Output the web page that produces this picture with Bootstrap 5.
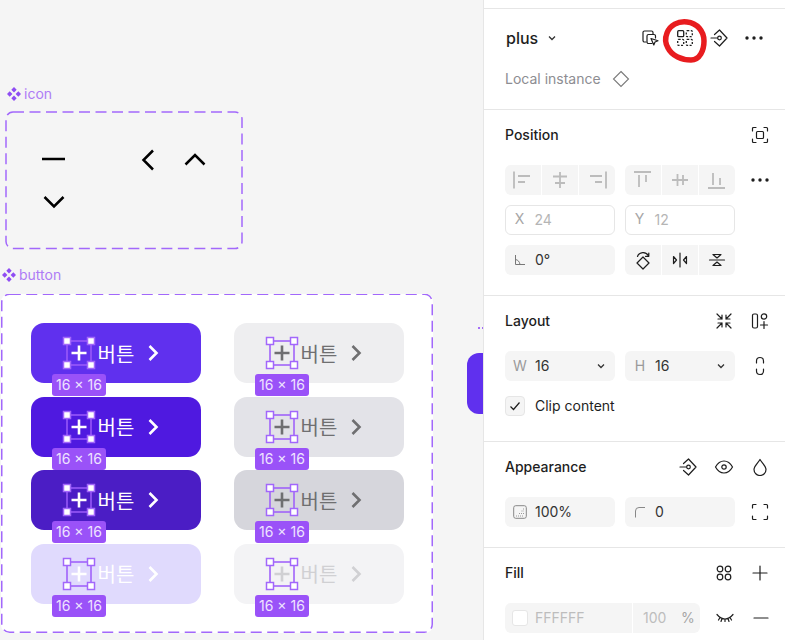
<!DOCTYPE html>
<html lang="ko">
<head>
<meta charset="utf-8">
<title>plus</title>
<link href="https://cdn.jsdelivr.net/npm/bootstrap@5.3.0/dist/css/bootstrap.min.css" rel="stylesheet">
<style>
html,body{margin:0;height:640px;overflow:hidden;background:#f5f5f5}
body{font-family:Inter,"Noto Sans CJK KR",sans-serif;font-size:14px;color:#1e1e1e}
.stage{width:785px;height:640px;position:relative}
.board{width:483px;height:640px;position:relative;overflow:hidden;background:#f5f5f5}
.fr-label{position:absolute;display:flex;align-items:center;gap:3px;color:#ae7cf6;font-size:14px;line-height:16px;white-space:nowrap}
.fr-icon{position:absolute;left:5px;top:111px;width:238px;height:139px}
.fr-btn{position:absolute;left:1px;top:294px;width:432px;height:339px;background:#fff;border-radius:8px;display:grid;grid-template-columns:170px 170px;grid-auto-rows:60px;column-gap:33px;row-gap:13.67px;padding:29px 0 0 30px}
.fr-line{position:absolute;inset:0;pointer-events:none}
.kbtn{position:relative;border-radius:13px;display:flex;align-items:center;justify-content:center;gap:6.5px;font-size:20px;line-height:24px;color:#fff}
.kb-1{background:#6030ee}.kb-2{background:#4f19e0}.kb-3{background:#4b1dc5}.kb-4{background:#e0dafd}
.kg-1{background:#eeeef0}.kg-2{background:#e3e3e8}.kg-3{background:#d6d6dc}.kg-4{background:#f3f3f5}
.kg-1,.kg-2,.kg-3{color:#6f6f71}.kg-4{color:#d0d0d3}
.word{padding-top:3px}
.sel{width:24px;height:24px;position:relative;flex:none}
.sel>svg{display:block}
.sel-over{position:absolute;left:-5px;top:-5px;width:34px;height:34px}
.dim{width:54px;height:22px;position:absolute;left:21px;top:51px;z-index:2;background:#9a52f8;border-radius:3px;color:#eee3ff;font-size:14px;line-height:22px;text-align:center;white-space:nowrap}
.stub{position:absolute;left:467px;top:353px;width:30px;height:61px;border-radius:12px;background:#6030ee}
.stub-dots{position:absolute;left:478px;top:327px;width:6px;height:2px;border-top:2px dotted #a56ef8}
.panel{position:absolute;left:483px;top:0;width:302px;height:640px;background:#fff;border-left:1px solid #e6e6e6;padding-top:8px;overflow:hidden}
.sect{border-top:1.5px solid #e6e6e6;padding-left:21px}
.s-top{height:101px;padding-top:17px}
.s-pos{height:186px;padding-top:14.5px}
.s-lay{height:146px;padding-top:14.5px}
.s-app{height:106px;padding-top:14.5px}
.s-fill{height:100px;padding-top:14.5px}
.phead{height:20px;line-height:20px;font-weight:500;font-size:14px;color:#1e1e1e;padding-right:7px;margin-bottom:20px}
.cell{width:36px;height:20px;display:flex;align-items:center;justify-content:center;flex:none}
.rowg{display:grid;grid-template-columns:110px 110px 30px;column-gap:10px;align-items:center;margin-bottom:10px}
.seg{height:30px;border-radius:6px;background:#f5f5f5;display:flex;overflow:hidden}
.seg>span{flex:1;display:flex;align-items:center;justify-content:center;border-left:1px solid #fff}
.seg>span:first-child{border-left:0}
.fld{height:30px;border-radius:6px;background:#f5f5f5;display:flex;align-items:center;position:relative;padding-left:30px;line-height:30px;color:#333}
.fld.out{background:#fff;border:1.5px solid #e6e6e6;padding-left:28.5px;color:#b5b5b5}
.fld-k{position:absolute;left:0;top:0;width:30px;height:100%;display:flex;align-items:center;justify-content:center;color:#9a9a9a;font-size:14px}
.fld.out .fld-k{left:-1.5px;top:-1.5px;height:30px;color:#a6a6a6}
.fld-c{position:absolute;right:9px;top:0;height:100%;display:flex;align-items:center}
.mid{display:flex;justify-content:center;align-items:center}
.plusname{font-size:16px;font-weight:500;line-height:20px;margin-left:1px}
.chev-top{margin-left:9px}
.local{color:#8d8d92;font-size:14px;line-height:20px}
.diam{margin-left:11px}
.tcell{width:34.5px;height:24px;display:flex;align-items:center;justify-content:center;flex:none}
.chk{width:20px;height:20px;border-radius:4px;background:#f5f5f5;border:1px solid #e6e6e6;display:flex;align-items:center;justify-content:center}
.fillrow{width:195px;height:30px;border-radius:6px;background:#f5f5f5;display:flex;align-items:center;position:relative;color:#bdbdbd}
.swatch{width:16px;height:16px;background:#fff;border:1px solid #e6e6e6;border-radius:3px;margin-left:7px;margin-right:7px}
.fsep{position:absolute;left:127px;top:0;bottom:0;width:1px;background:#fff}
.f-num{position:absolute;left:138px}
.f-pct{position:absolute;left:176px;color:#a5a5a5}
.scribble{position:absolute;left:0;top:0;width:785px;height:640px;pointer-events:none}
svg{flex:none}
.ink{fill:none;stroke:#1e1e1e;stroke-width:1.2;stroke-linecap:round;stroke-linejoin:round}
.mut{fill:none;stroke:#bcbcbc;stroke-width:1.8}
</style>
</head>
<body>
<svg width="0" height="0" class="position-absolute">
<symbol id="m" viewBox="0 0 14 14"><g fill="#8f4df3"><path d="M7 0l2.7 2.7L7 5.4 4.3 2.7z"/><path d="M7 8.6l2.7 2.7L7 14l-2.7-2.7z"/><path d="M2.7 4.3l2.7 2.7-2.7 2.7L0 7z"/><path d="M11.3 4.3L14 7l-2.7 2.7L8.600 7z"/></g></symbol>
<symbol id="box" viewBox="0 0 34 34"><rect x="5" y="5" width="24" height="24" fill="none" stroke="#9c5bfa" stroke-width="1.5"/><g fill="#fff" stroke="#a267fb" stroke-width="1.5"><rect x="1.500" y="1.500" width="7" height="7"/><rect x="25.500" y="1.500" width="7" height="7"/><rect x="1.500" y="25.500" width="7" height="7"/><rect x="25.500" y="25.500" width="7" height="7"/></g></symbol>
<symbol id="pl" viewBox="0 0 24 24"><path d="M12 4.500v15M4.500 12h15" fill="none" stroke="currentColor" stroke-width="2.6"/></symbol>
<symbol id="ch" viewBox="0 0 24 24"><path d="M8.500 5l7 7-7 7" fill="none" stroke="currentColor" stroke-width="2.6"/></symbol>
<symbol id="dn" viewBox="0 0 10 10"><path d="M2 3.500L5 6.500l3-3" fill="none" stroke="#333" stroke-width="1.300"/></symbol>
<symbol id="dots" viewBox="0 0 20 6"><circle cx="3" cy="3" r="1.700" fill="#1e1e1e"/><circle cx="10" cy="3" r="1.700" fill="#1e1e1e"/><circle cx="17" cy="3" r="1.700" fill="#1e1e1e"/></symbol>
<symbol id="comp" viewBox="0 0 20 20"><path class="ink" d="M5.500 6.500L10.500 2 18 10 10.500 18 5.500 13.500M2 10H8.500"/><circle class="ink" cx="10.500" cy="10" r="1.800"/></symbol>
</svg>

<div class="stage">
  <div class="board">
    <div class="fr-label" style="left:7px;top:86px"><svg width="14" height="14"><use href="#m"/></svg><span>icon</span></div>
    <div class="fr-icon">
      <svg class="fr-line" width="238" height="139" viewBox="0 0 238 139">
        <rect x="1" y="1" width="236" height="136.500" rx="7" fill="none" stroke="#a268fb" stroke-width="1.500" stroke-dasharray="11 5.500"/>
        <g fill="none" stroke="#000" stroke-width="2.500">
          <path d="M37 48h23"/>
          <path d="M148 39.500l-9.500 9.500 9.500 9.500"/>
          <path d="M180.500 53.500l9.500-9.500 9.500 9.500"/>
          <path d="M39.500 86l9.500 9.500 9.500-9.500"/>
        </g>
      </svg>
    </div>
    <div class="fr-label" style="left:2px;top:267px"><svg width="14" height="14"><use href="#m"/></svg><span>button</span></div>

    <div class="fr-btn">
      <svg class="fr-line" width="432" height="339" viewBox="0 0 432 339">
        <rect x="0.750" y="0.250" width="430.500" height="338" rx="8" fill="none" stroke="#a268fb" stroke-width="1.500" stroke-dasharray="11 5.500"/>
      </svg>
      <div class="kbtn kb-1"><span class="sel"><svg width="24" height="24"><use href="#pl"/></svg><svg class="sel-over"><use href="#box"/></svg></span><span class="word">버튼</span><svg width="24" height="24"><use href="#ch"/></svg><span class="dim">16 × 16</span></div>
      <div class="kbtn kg-1"><span class="sel"><svg width="24" height="24"><use href="#pl"/></svg><svg class="sel-over"><use href="#box"/></svg></span><span class="word">버튼</span><svg width="24" height="24"><use href="#ch"/></svg><span class="dim">16 × 16</span></div>
      <div class="kbtn kb-2"><span class="sel"><svg width="24" height="24"><use href="#pl"/></svg><svg class="sel-over"><use href="#box"/></svg></span><span class="word">버튼</span><svg width="24" height="24"><use href="#ch"/></svg><span class="dim">16 × 16</span></div>
      <div class="kbtn kg-2"><span class="sel"><svg width="24" height="24"><use href="#pl"/></svg><svg class="sel-over"><use href="#box"/></svg></span><span class="word">버튼</span><svg width="24" height="24"><use href="#ch"/></svg><span class="dim">16 × 16</span></div>
      <div class="kbtn kb-3"><span class="sel"><svg width="24" height="24"><use href="#pl"/></svg><svg class="sel-over"><use href="#box"/></svg></span><span class="word">버튼</span><svg width="24" height="24"><use href="#ch"/></svg><span class="dim">16 × 16</span></div>
      <div class="kbtn kg-3"><span class="sel"><svg width="24" height="24"><use href="#pl"/></svg><svg class="sel-over"><use href="#box"/></svg></span><span class="word">버튼</span><svg width="24" height="24"><use href="#ch"/></svg><span class="dim">16 × 16</span></div>
      <div class="kbtn kb-4"><span class="sel"><svg width="24" height="24"><use href="#pl"/></svg><svg class="sel-over"><use href="#box"/></svg></span><span class="word">버튼</span><svg width="24" height="24"><use href="#ch"/></svg><span class="dim">16 × 16</span></div>
      <div class="kbtn kg-4"><span class="sel"><svg width="24" height="24"><use href="#pl"/></svg><svg class="sel-over"><use href="#box"/></svg></span><span class="word">버튼</span><svg width="24" height="24"><use href="#ch"/></svg><span class="dim">16 × 16</span></div>
    </div>
    <div class="stub-dots"></div>
    <div class="stub"></div>
  </div>

  <aside class="panel">
    <section class="sect s-top">
      <div class="d-flex align-items-center" style="height:24px">
        <span class="plusname">plus</span>
        <svg class="chev-top" width="10" height="10"><use href="#dn"/></svg>
        <div class="d-flex ms-auto" style="padding-right:14px">
          <span class="tcell"><svg width="20" height="20" viewBox="0 0 20 20"><path class="ink" d="M6 14H4.500A1.500 1.500 0 0 1 3 12.500v-8A1.500 1.500 0 0 1 4.500 3h7A1.500 1.500 0 0 1 13 4.500V6"/><path class="ink" d="M12 15.500H8.500A1.500 1.500 0 0 1 7 14V8A1.500 1.500 0 0 1 8.500 6.500H14A1.500 1.500 0 0 1 15.500 8v2"/><path class="ink" d="M11 10.500l7 2.300-3 1.200-1.200 3z" fill="#fff"/></svg></span>
          <span class="tcell"><svg width="20" height="20" viewBox="0 0 20 20"><rect x="2.700" y="2.700" width="6" height="6" rx="1" fill="none" stroke="#1e1e1e" stroke-width="1.300"/><g fill="none" stroke="#1e1e1e" stroke-width="1.300" stroke-dasharray="2 1.500"><rect x="11.300" y="2.700" width="6" height="6" rx="1"/><rect x="2.700" y="11.300" width="6" height="6" rx="1"/><rect x="11.300" y="11.300" width="6" height="6" rx="1"/></g></svg></span>
          <span class="tcell"><svg width="20" height="20"><use href="#comp"/></svg></span>
          <span class="tcell"><svg width="20" height="6"><use href="#dots"/></svg></span>
        </div>
      </div>
      <div class="d-flex align-items-center" style="margin-top:19px;height:20px">
        <span class="local">Local instance</span>
        <svg class="diam" width="18" height="18" viewBox="0 0 18 18"><path d="M9 1.500L16.500 9 9 16.500 1.500 9z" fill="none" stroke="#7a7a7a" stroke-width="1.100"/></svg>
      </div>
    </section>

    <section class="sect s-pos">
      <div class="phead d-flex justify-content-between align-items-center"><span>Position</span>
        <span class="cell"><svg width="18" height="18" viewBox="0 0 18 18"><path class="ink" d="M1.500 5V2.500a1 1 0 0 1 1-1H5M13 1.500h2.500a1 1 0 0 1 1 1V5M16.500 13v2.500a1 1 0 0 1-1 1H13M5 16.500H2.500a1 1 0 0 1-1-1V13"/><rect class="ink" x="5.500" y="5.500" width="7" height="7" rx="1"/></svg></span></div>
      <div class="rowg">
        <div class="seg">
          <span><svg width="20" height="20" viewBox="0 0 20 20"><path class="mut" d="M1 1.500v17M5 6h12M5 12h7"/></svg></span>
          <span><svg width="20" height="20" viewBox="0 0 20 20"><path class="mut" d="M10 2v16M3 6.500h14M5 13h10"/></svg></span>
          <span><svg width="20" height="20" viewBox="0 0 20 20"><path class="mut" d="M19 1.500v17M3 6h12M8 12h7"/></svg></span>
        </div>
        <div class="seg">
          <span><svg width="20" height="20" viewBox="0 0 20 20"><path class="mut" d="M1 2h17M6 5v12M13 5v7"/></svg></span>
          <span><svg width="20" height="20" viewBox="0 0 20 20"><path class="mut" d="M2 10h16M7.500 4v12M13 5v10"/></svg></span>
          <span><svg width="20" height="20" viewBox="0 0 20 20"><path class="mut" d="M1 18h17M6 3v12M13 8v7"/></svg></span>
        </div>
        <div class="mid"><svg width="20" height="6"><use href="#dots"/></svg></div>
      </div>
      <div class="rowg">
        <div class="fld out"><span class="fld-k">X</span>24</div>
        <div class="fld out"><span class="fld-k">Y</span>12</div>
      </div>
      <div class="rowg">
        <div class="fld"><span class="fld-k"><svg width="14" height="14" viewBox="0 0 14 14"><path d="M2.500 2v9.500H12M2.500 6.500c2.500.5 4 2 4.500 5" fill="none" stroke="#777" stroke-width="1"/></svg></span>0°</div>
        <div class="seg">
          <span><svg width="20" height="20" viewBox="0 0 20 20"><path class="ink" d="M10 7L16 13 10 19 4 13zM4.500 6.500C6 2 13 1 15.500 6M15.800 3v3.300h-3.300"/></svg></span>
          <span><svg width="20" height="20" viewBox="0 0 20 20"><path class="ink" d="M10 3v14M3.500 6.500L6.500 10 3.500 13.500zM16.500 6.500L13.500 10 16.500 13.500z"/></svg></span>
          <span><svg width="20" height="20" viewBox="0 0 20 20"><path class="ink" d="M2.500 10h15M6 4.500h8L10 8zM6 15.500h8L10 12z"/></svg></span>
        </div>
      </div>
    </section>

    <section class="sect s-lay">
      <div class="phead d-flex align-items-center"><span class="me-auto">Layout</span>
        <span class="cell"><svg width="18" height="18" viewBox="0 0 18 18"><path class="ink" d="M2 2l5 5M3 7h4V3M16 2l-5 5M15 7h-4V3M2 16l5-5M3 11h4v4M16 16l-5-5M15 11h-4v4"/></svg></span>
        <span class="cell"><svg width="18" height="18" viewBox="0 0 18 18"><rect class="ink" x="1.500" y="2" width="5" height="14" rx="1.500"/><circle class="ink" cx="13" cy="4.500" r="2.700"/><path class="ink" d="M13 9.500v7M9.500 13h7"/></svg></span>
      </div>
      <div class="rowg" style="margin-bottom:15px">
        <div class="fld"><span class="fld-k">W</span>16<span class="fld-c"><svg width="10" height="10"><use href="#dn"/></svg></span></div>
        <div class="fld"><span class="fld-k">H</span>16<span class="fld-c"><svg width="10" height="10"><use href="#dn"/></svg></span></div>
        <div class="mid"><svg width="12" height="20" viewBox="0 0 12 20"><path class="ink" d="M2.500 7V5a3.500 3.500 0 0 1 7 0v2M2.500 13v2a3.500 3.500 0 0 0 7 0v-2"/></svg></div>
      </div>
      <div class="d-flex align-items-center" style="gap:10px;height:20px">
        <span class="chk"><svg width="12" height="12" viewBox="0 0 12 12"><path d="M1.500 6.500L4.500 9.500 10.500 2.500" fill="none" stroke="#1e1e1e" stroke-width="1.200"/></svg></span>
        <span>Clip content</span>
      </div>
    </section>

    <section class="sect s-app">
      <div class="phead d-flex align-items-center"><span class="me-auto">Appearance</span>
        <span class="cell"><svg width="20" height="20"><use href="#comp"/></svg></span>
        <span class="cell"><svg width="20" height="20" viewBox="0 0 20 20"><path class="ink" d="M1.500 10C4 5.500 7 4 10 4s6 1.500 8.500 6c-2.500 4.500-5.500 6-8.500 6s-6-1.500-8.500-6z"/><circle class="ink" cx="10" cy="10" r="2.200"/></svg></span>
        <span class="cell"><svg width="16" height="18" viewBox="0 0 16 18"><path class="ink" d="M8 1.500C10 5 14 8 14 11.500A6 6 0 0 1 2 11.500C2 8 6 5 8 1.500z"/></svg></span>
      </div>
      <div class="rowg">
        <div class="fld"><span class="fld-k"><svg width="14" height="14" viewBox="0 0 14 14"><rect x=".7" y=".7" width="12.600" height="12.600" rx="2" fill="none" stroke="#888" stroke-width="1"/><path d="M3 11h8M6 8.500h5M8.500 6h2.500M10.500 3.500v1" stroke="#999" stroke-width="1" stroke-dasharray="1 1" fill="none"/></svg></span>100%</div>
        <div class="fld"><span class="fld-k"><svg width="12" height="12" viewBox="0 0 12 12"><path d="M1.500 11.500V5a3.500 3.500 0 0 1 3.500-3.500h6" fill="none" stroke="#888" stroke-width="1"/></svg></span>0</div>
        <div class="mid"><svg width="18" height="18" viewBox="0 0 18 18"><path class="ink" d="M1.500 5V2.500a1 1 0 0 1 1-1H5M13 1.500h2.500a1 1 0 0 1 1 1V5M16.500 13v2.500a1 1 0 0 1-1 1H13M5 16.500H2.500a1 1 0 0 1-1-1V13"/></svg></div>
      </div>
    </section>

    <section class="sect s-fill">
      <div class="phead d-flex align-items-center"><span class="me-auto">Fill</span>
        <span class="cell"><svg width="18" height="18" viewBox="0 0 18 18"><g class="ink"><circle cx="5" cy="5" r="2.800"/><circle cx="13" cy="5" r="2.800"/><circle cx="5" cy="13" r="2.800"/><circle cx="13" cy="13" r="2.800"/></g></svg></span>
        <span class="cell"><svg width="16" height="16" viewBox="0 0 16 16"><path class="ink" d="M8 1v14M1 8h14"/></svg></span>
      </div>
      <div class="d-flex align-items-center">
        <div class="fillrow"><span class="swatch"></span><span>FFFFFF</span><span class="fsep"></span><span class="f-num">100</span><span class="f-pct">%</span></div>
        <span class="cell" style="margin-left:7px;width:36px"><svg width="18" height="10" viewBox="0 0 18 10"><path class="ink" d="M1 1.500C4 5 6.500 6 9 6s5-1 8-4.500M4 4.500L2.500 7M9 6v2.500M14 4.500L15.500 7M6 5.500L5 8.500M12 5.500l1 3"/></svg></span>
        <span class="cell"><svg width="16" height="4" viewBox="0 0 16 4"><path class="ink" d="M1 2h14"/></svg></span>
      </div>
    </section>
  </aside>

  <svg class="scribble" width="785" height="640" viewBox="0 0 785 640">
    <path d="M667 33C670 25 678 21 687 22C697 23 704 31 704 41C704 50 700 60 691 60C682 60 672 56 668 48C665 43 665 38 667 33Z" fill="none" stroke="#e81c1f" stroke-width="5.500"/>
  </svg>
</div>
<script src="https://cdn.jsdelivr.net/npm/bootstrap@5.3.0/dist/js/bootstrap.bundle.min.js"></script>
</body>
</html>
